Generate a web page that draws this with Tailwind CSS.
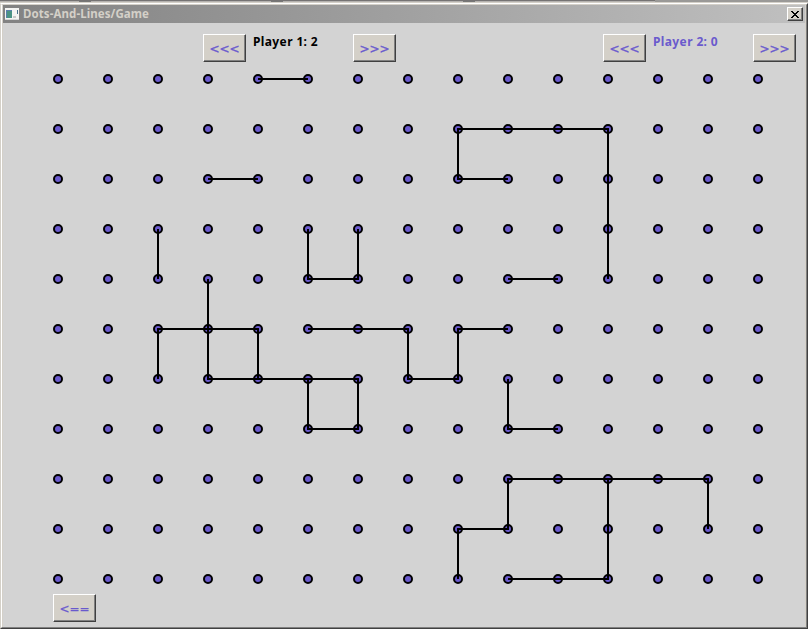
<!DOCTYPE html>
<html lang="en">
<head>
<meta charset="utf-8">
<title>Dots-And-Lines/Game</title>
<script src="https://cdn.jsdelivr.net/npm/@tailwindcss/browser@4"></script>
</head>
<body class="w-[808px] h-[629px] overflow-hidden bg-[#d3d3d3] font-['Noto_Sans','Open_Sans',sans-serif]">
<div class="relative flex h-[629px] w-[808px] flex-col">
  <!-- window behind the top edge -->
  <div class="flex h-[3px] shrink-0 flex-col">
    <div class="flex h-px bg-[#757373]"><i class="ml-auto w-[153px] bg-[#9a9997]"></i></div>
    <div class="flex h-px bg-[#b5b2af]"><i class="ml-[79px] w-3 shrink-0 bg-[#777]"></i><i class="ml-[180px] w-3 shrink-0 bg-[#777]"></i><i class="ml-[180px] w-3 shrink-0 bg-[#777]"></i><i class="ml-auto w-[153px] bg-[#9a9997]"></i></div>
    <div class="h-px bg-[#d4d0c8]"></div>
  </div>
  <div class="flex min-h-0 flex-1 flex-col border-t border-l border-r border-b border-t-white border-l-[#d4d0c8] border-r-[#404040] border-b-[#404040]">
    <div class="flex min-h-0 flex-1 flex-col border border-t-[#d4d0c8] border-l-white border-r-[#808080] border-b-[#808080]">
      <div class="flex min-h-0 flex-1 flex-col border-x border-[#d4d0c8]">
        <header class="flex h-[18px] shrink-0 items-center bg-linear-to-r from-[#828282] to-[#c0c0c0] pl-[2px] pr-[2px]">
          <svg class="h-[12px] w-[14px]" viewBox="0 0 14 12" shape-rendering="crispEdges">
            <rect width="14" height="12" fill="#f4f4f2"/><rect y="11" width="14" height="1" fill="#d5d5d5"/>
            <rect x="1" y="2" width="6" height="8" fill="#5c7fae"/><rect x="2" y="3" width="5" height="7" fill="#4b9384"/>
            <rect x="12" y="2" width="1" height="4" fill="#47718b"/><rect x="8" y="8" width="3" height="2" fill="#c9c9c9"/>
          </svg>
          <span class="ml-[4px] whitespace-nowrap text-[11.5px] leading-[18px] font-bold tracking-[0.08px] text-[#d4d0c8]">Dots-And-Lines/Game</span>
          <button aria-label="Close" class="ml-auto flex h-[14px] w-[16px] items-center justify-center border border-t-white border-l-white border-r-[#404040] border-b-[#404040] bg-[#d4d0c8] shadow-[inset_-1px_-1px_#808080]">
            <svg class="h-[7px] w-[8px]" viewBox="0 0 8 7" shape-rendering="crispEdges"><path d="M0 0h2v1h1v1h2v-1h1v-1h2v1h-1v1h-1v1h-1v1h1v1h1v1h1v1h-2v-1h-1v-1h-2v1h-1v1h-2v-1h1v-1h1v-1h1v-1h-1v-1h-1v-1h-1z" fill="#000"/></svg>
          </button>
        </header>
        <main class="flex min-h-0 flex-1 flex-col bg-[#d3d3d3]">
          <div class="flex h-[46px] shrink-0 pl-[200px] pt-[11px] text-[12px] font-bold">
            <div class="flex w-[400px]">
              <button class="h-[28px] w-[43px] border border-t-white border-l-white border-r-[#404040] border-b-[#404040] bg-[#d4d0c8] pt-px text-[12px] font-normal font-['DejaVu_Sans'] text-[#6a5acd] [-webkit-text-stroke:0.35px_#6a5acd] shadow-[inset_-1px_-1px_#808080]">&lt;&lt;&lt;</button>
              <span class="w-[107px] whitespace-nowrap pl-[7px] leading-[15px] tracking-[0.38px] text-black">Player 1: 2</span>
              <button class="h-[28px] w-[43px] border border-t-white border-l-white border-r-[#404040] border-b-[#404040] bg-[#d4d0c8] pt-px text-[12px] font-normal font-['DejaVu_Sans'] text-[#6a5acd] [-webkit-text-stroke:0.35px_#6a5acd] shadow-[inset_-1px_-1px_#808080]">&gt;&gt;&gt;</button>
            </div>
            <div class="flex">
              <button class="h-[28px] w-[43px] border border-t-white border-l-white border-r-[#404040] border-b-[#404040] bg-[#d4d0c8] pt-px text-[12px] font-normal font-['DejaVu_Sans'] text-[#6a5acd] [-webkit-text-stroke:0.35px_#6a5acd] shadow-[inset_-1px_-1px_#808080]">&lt;&lt;&lt;</button>
              <span class="w-[107px] whitespace-nowrap pl-[7px] leading-[15px] tracking-[0.38px] text-[#6a5acd]">Player 2: 0</span>
              <button class="h-[28px] w-[43px] border border-t-white border-l-white border-r-[#404040] border-b-[#404040] bg-[#d4d0c8] pt-px text-[12px] font-normal font-['DejaVu_Sans'] text-[#6a5acd] [-webkit-text-stroke:0.35px_#6a5acd] shadow-[inset_-1px_-1px_#808080]">&gt;&gt;&gt;</button>
            </div>
          </div>
          <!-- board: dots every 50 units, then the drawn lines -->
          <svg class="ml-[45px] h-[520px] w-[720px] shrink-0" viewBox="48 69 720 520">
            <g id="dots" fill="#6a5acd" stroke="#000" stroke-width="2"></g>
            <path fill="none" stroke="#000" stroke-width="2" d="M258 79H308 M508 179H458V129H608V279 M208 179H258 M158 229V279 M308 229V279H358V229 M508 279H558 M208 279V379H358V429H308V379 M158 379V329H258V379 M308 329H408V379H458V329H508 M508 379V429H558 M458 579V529H508V479H708V529 M608 479V579H508"/>
          </svg>
          <div class="mt-[5px] ml-[50px] flex">
            <button class="h-[28px] w-[43px] border border-t-white border-l-white border-r-[#404040] border-b-[#404040] bg-[#d4d0c8] pt-px text-[12px] font-normal font-['DejaVu_Sans'] text-[#6a5acd] [-webkit-text-stroke:0.2px_#6a5acd] shadow-[inset_-1px_-1px_#808080]">&lt;==</button>
          </div>
        </main>
      </div>
    </div>
  </div>
</div>
<script>
const g = document.getElementById('dots');
for (let y = 79; y <= 579; y += 50)
  for (let x = 58; x <= 758; x += 50) {
    const c = document.createElementNS('http://www.w3.org/2000/svg', 'circle');
    c.setAttribute('cx', x); c.setAttribute('cy', y); c.setAttribute('r', 4);
    g.appendChild(c);
  }
</script>
</body>
</html>
